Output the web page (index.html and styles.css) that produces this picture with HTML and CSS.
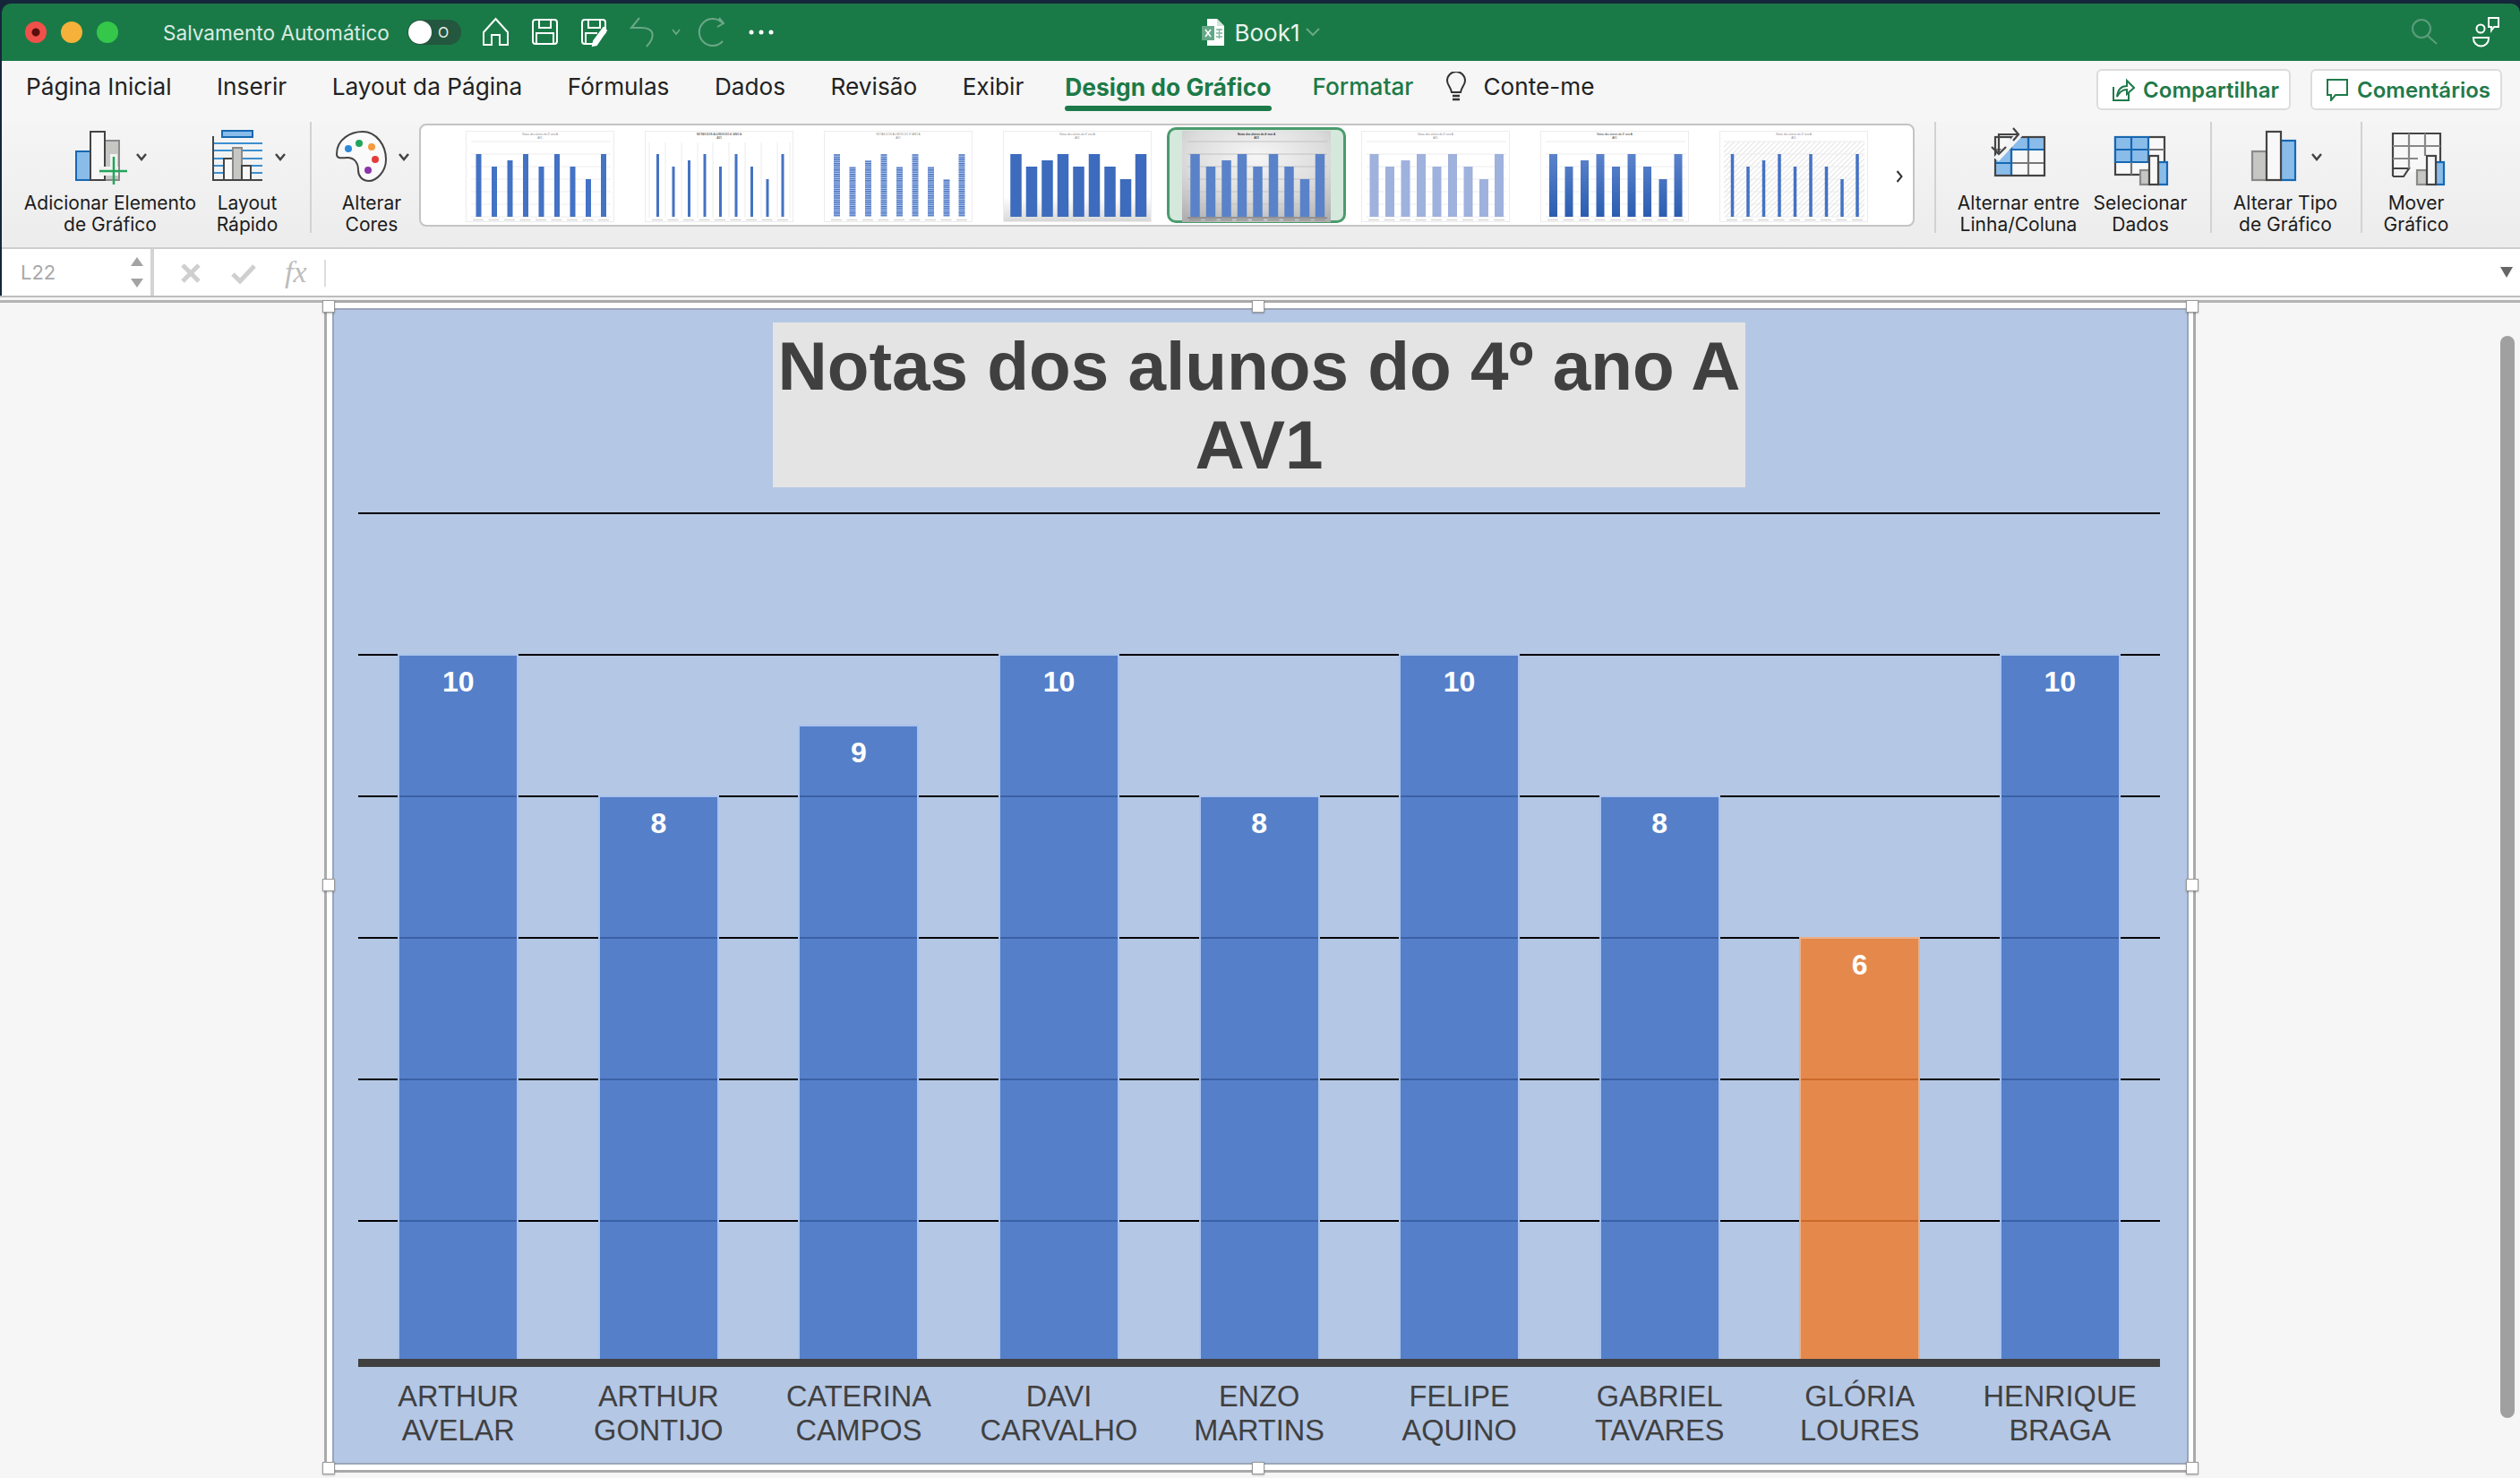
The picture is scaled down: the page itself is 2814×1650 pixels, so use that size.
FILE: index.html
```html
<!DOCTYPE html>
<html lang="pt-BR">
<head>
<meta charset="utf-8">
<title>Book1 - Excel</title>
<link rel="stylesheet" href="styles.css">
</head>
<body>
<svg class="defs" aria-hidden="true">
  <defs>
    <path id="tb" d="M14.5 96V26M32 96V40M49.5 96V33M67 96V26M84.5 96V40M102 96V26M119.5 96V40M137 96V54M154 96V26"/>
    <path id="tg" d="M6 12H162M6 26H162M6 40H162M6 54H162M6 68H162M6 82H162M6 96H162"/>
    <path id="tv" d="M5 13V97M23 13V97M41 13V97M59 13V97M76 13V97M94 13V97M112 13V97M130 13V97M148 13V97M162 13V97"/>
    <path id="tl" d="M8 99.5H160"/>
    <pattern id="stripes" width="2" height="2.4" patternUnits="userSpaceOnUse"><rect width="2" height="2.4" fill="#b6c8ea"/><rect width="2" height="1.3" fill="#4472c4"/></pattern>
    <pattern id="hatch" width="4" height="4" patternUnits="userSpaceOnUse" patternTransform="rotate(45)"><rect width="4" height="4" fill="#fff"/><rect width="1" height="4" fill="#e4e4e4"/></pattern>
    <linearGradient id="bgDark" x1="0" y1="0" x2="0" y2="1"><stop offset="0" stop-color="#fff"/><stop offset=".72" stop-color="#fff"/><stop offset="1" stop-color="#d8d8d8"/></linearGradient>
    <radialGradient id="bgSel" cx=".5" cy=".28" r=".85"><stop offset="0" stop-color="#f6f6f6"/><stop offset=".55" stop-color="#dcdcdc"/><stop offset="1" stop-color="#adadad"/></radialGradient>
    <linearGradient id="barGrad" gradientUnits="userSpaceOnUse" x1="0" y1="26" x2="0" y2="96"><stop offset="0" stop-color="#5b83cc"/><stop offset="1" stop-color="#2b5db0"/></linearGradient>
  </defs>
</svg>

<header class="titlebar">
  <div class="tb-left">
    <span class="light red"></span>
    <span class="light yellow"></span>
    <span class="light green"></span>
    <span class="autosave">Salvamento Automático</span>
    <span class="toggle"><span class="knob"></span><span class="toggle-o">O</span></span>
    <svg class="qat" viewBox="530 14 345 44" width="345" height="44" fill="none" stroke="#fff" stroke-width="2">
      <path d="M540 36L553.500 21L567 36V50H558V39H549V50H540Z"/>
      <path d="M598 22H619Q622 22 622 25V46Q622 49 619 49H598Q595 49 595 46V25Q595 22 598 22ZM602 22V31H615V22M599 49V37H618V49"/>
      <path d="M653 22H673Q676 22 676 25V36L664 49H653Q650 49 650 46V25Q650 22 653 22ZM657 22V31H670V22M654 49V37H667"/>
      <path d="M677 34L666 50L662 51L663 46L674 31Z" fill="#fff"/>
      <g stroke="#6aa888">
        <path d="M714 20L705 31H716C730 31 733 40 722 52"/>
        <path d="M751 33L755 38L759 33" stroke-width="1.800"/>
        <path d="M807 26A15 15 0 1 0 807 46M803 20L808 26L801 30"/>
      </g>
      <g fill="#fff" stroke="none"><circle cx="839" cy="36" r="2.500"/><circle cx="850" cy="36" r="2.500"/><circle cx="861" cy="36" r="2.500"/></g>
    </svg>
  </div>
  <div class="tb-center">
    <svg class="file-ic" viewBox="0 0 26 30" width="26" height="30">
      <path d="M6 0H17L25 8V30H6Z" fill="#fff"/>
      <path d="M17 0L25 8H17Z" fill="#cfe4d8"/>
      <rect x="0" y="8" width="14" height="16" fill="#62a886"/>
      <path d="M4 12L10 20M10 12L4 20" stroke="#fff" stroke-width="1.600"/>
      <path d="M16 12H23M16 16H23M16 20H23M19.500 11V22" stroke="#7fb79b" stroke-width="1.400"/>
    </svg>
    <span class="doc-name">Book1</span>
    <svg class="doc-chev" viewBox="0 0 16 10" width="16" height="10" fill="none" stroke="#6aa888" stroke-width="2"><path d="M1 1L8 8L15 1"/></svg>
  </div>
  <div class="tb-right">
    <svg viewBox="2690 18 105 38" width="105" height="38" fill="none">
      <circle cx="2703" cy="33" r="10" stroke="#5d9d7d" stroke-width="2"/>
      <path d="M2710 41L2720 50" stroke="#5d9d7d" stroke-width="2"/>
      <g stroke="#fff" stroke-width="2">
        <circle cx="2769" cy="33" r="4.500"/>
        <path d="M2761 43H2778V44A8.500 8.500 0 0 1 2761 44Z"/>
        <path d="M2778 21H2789V31H2784L2781 35V31H2778Z"/>
      </g>
    </svg>
  </div>
</header>

<nav class="tabs">
  <div class="tab-list">
    <span class="tab">Página Inicial</span>
    <span class="tab">Inserir</span>
    <span class="tab">Layout da Página</span>
    <span class="tab">Fórmulas</span>
    <span class="tab">Dados</span>
    <span class="tab">Revisão</span>
    <span class="tab">Exibir</span>
    <span class="tab tab-active">Design do Gráfico</span>
    <span class="tab tab-green">Formatar</span>
    <span class="tab tab-tell">
      <span class="tell-row">
        <svg viewBox="0 0 24 34" width="24" height="34" fill="none" stroke="#333" stroke-width="2"><path d="M7 23C6 17 2 15 2 10A10 10 0 0 1 22 10C22 15 18 17 17 23Z"/><path d="M8 27H16M8 31H16" stroke-width="2.400"/></svg>
        Conte-me
      </span>
    </span>
  </div>
  <div class="tab-actions">
    <button class="action">
      <svg viewBox="0 0 26 26" width="26" height="26" fill="none" stroke="#1f7a4b" stroke-width="2"><path d="M2 10V25H19V17"/><path d="M6 21C7 12 12 9 17 9V3L25 11L17 18V13C12 13 9 15 6 21Z"/></svg>
      Compartilhar
    </button>
    <button class="action">
      <svg viewBox="0 0 26 26" width="26" height="26" fill="none" stroke="#1f7a4b" stroke-width="2"><path d="M2 2H24V19H11L6 25V19H2Z"/></svg>
      Comentários
    </button>
  </div>
</nav>

<section class="ribbon">
  <div class="rb-item w-add">
    <svg class="rb-ic" viewBox="27 140 192 72" fill="none" stroke-width="2">
      <rect x="85" y="169" width="16" height="32" fill="#8abcea" stroke="#1668b2"/>
      <rect x="117" y="157" width="16" height="44" fill="#c6c6c4" stroke="#8a8a88"/>
      <rect x="101" y="147" width="16" height="54" fill="#f8f8f8" stroke="#444"/>
      <rect x="110" y="186" width="22" height="10" fill="#f2f2f2" stroke="none"/>
      <rect x="123" y="172" width="8" height="24" fill="#f2f2f2" stroke="none"/>
      <path d="M111 191H142M127 175V206" stroke="#22a65a" stroke-width="2.500"/>
      <path d="M153 172L158 178L163 172" stroke="#444" stroke-width="2.500"/>
    </svg>
    <span class="rb-label">Adicionar Elemento<br>de Gráfico</span>
  </div>
  <div class="rb-item w-layout">
    <svg class="rb-ic" viewBox="226 140 100 72" fill="none" stroke-width="2">
      <path d="M238 160H293M238 168H293M238 177H293M238 185H293M238 193H293" stroke="#3c8fd0"/>
      <rect x="248" y="146" width="34" height="7" fill="#8abcea" stroke="#1668b2"/>
      <rect x="250" y="177" width="10" height="24" fill="#f8f8f8" stroke="#444"/>
      <rect x="260" y="165" width="10" height="36" fill="#c6c6c4" stroke="#8a8a88"/>
      <rect x="270" y="185" width="10" height="16" fill="#f8f8f8" stroke="#444"/>
      <path d="M238 152V201H293" stroke="#444"/>
      <path d="M308 172L313 178L318 172" stroke="#444" stroke-width="2.500"/>
    </svg>
    <span class="rb-label">Layout<br>Rápido</span>
  </div>
  <span class="rb-sep s-a"></span>
  <div class="rb-item w-cores">
    <svg class="rb-ic" viewBox="375 140 80 72" fill="none">
      <path d="M376 172C376 155 392 147 405 147C420 147 431 162 431 178C431 192 420 202 412 202C404 202 400 196 400 190C400 182 396 176 388 176C382 176 376 178 376 172Z" fill="#fafafa" stroke="#444" stroke-width="2"/>
      <circle cx="389" cy="166" r="4" fill="#2e8ad8"/>
      <circle cx="401" cy="160" r="4" fill="#22a55a"/>
      <circle cx="415" cy="164" r="4" fill="#f59a3e"/>
      <circle cx="419" cy="178" r="4" fill="#e53b3b"/>
      <circle cx="411" cy="190" r="4" fill="#8c35a8"/>
      <path d="M446 172L451 178L456 172" stroke="#444" stroke-width="2.500"/>
    </svg>
    <span class="rb-label">Alterar<br>Cores</span>
  </div>

  <div class="gallery">
    <div class="cell">
      <svg class="thumb" viewBox="0 0 166 102">
        <text class="tt" x="83" y="5">Notas dos alunos do 4º ano A</text><text class="tt" x="83" y="9">AV1</text>
        <use href="#tg" class="g-light"/><use href="#tb" class="b-6"/><use href="#tl" class="t-lab"/>
      </svg>
    </div>
    <div class="cell">
      <svg class="thumb" viewBox="0 0 166 102">
        <text class="tt tt-b" x="83" y="5">NOTAS DOS ALUNOS DO 4º ANO A</text><text class="tt tt-b" x="83" y="9">AV1</text>
        <use href="#tv" class="g-light"/><use href="#tb" class="b-3"/><use href="#tl" class="t-lab"/>
      </svg>
    </div>
    <div class="cell">
      <svg class="thumb" viewBox="0 0 166 102">
        <text class="tt" x="83" y="5">NOTAS DOS ALUNOS DO 4º ANO A</text><text class="tt" x="83" y="9">AV1</text>
        <use href="#tb" class="b-stripe"/><use href="#tl" class="t-lab"/>
      </svg>
    </div>
    <div class="cell">
      <svg class="thumb" viewBox="0 0 166 102">
        <rect class="bg-dark" width="166" height="102"/>
        <text class="tt" x="83" y="5">Notas dos alunos do 4º ano A</text><text class="tt" x="83" y="9">AV1</text>
        <use href="#tb" class="b-12"/><use href="#tl" class="t-lab"/>
      </svg>
    </div>
    <div class="cell cell-sel">
      <svg class="thumb thumb-sel" viewBox="0 0 166 102">
        <rect class="bg-sel" width="166" height="102"/>
        <text class="tt tt-b tt-k" x="83" y="5">Notas dos alunos do 4º ano A</text><text class="tt tt-b tt-k" x="83" y="9">AV1</text>
        <use href="#tg" class="g-mid"/><use href="#tb" class="b-10"/><path class="t-axis" d="M6 97H162"/><use href="#tl" class="t-lab-d"/>
      </svg>
    </div>
    <div class="cell">
      <svg class="thumb" viewBox="0 0 166 102">
        <text class="tt" x="83" y="5">Notas dos alunos do 4º ano A</text><text class="tt" x="83" y="9">AV1</text>
        <use href="#tg" class="g-light"/><use href="#tb" class="b-pale"/><use href="#tl" class="t-lab"/>
      </svg>
    </div>
    <div class="cell">
      <svg class="thumb" viewBox="0 0 166 102">
        <text class="tt tt-k" x="83" y="5">Notas dos alunos do 4º ano A</text><text class="tt tt-k" x="83" y="9">AV1</text>
        <use href="#tg" class="g-light"/><use href="#tb" class="b-grad"/><use href="#tl" class="t-lab"/>
      </svg>
    </div>
    <div class="cell">
      <svg class="thumb" viewBox="0 0 166 102">
        <rect class="bg-hatch" x="5" y="12" width="157" height="84"/>
        <text class="tt" x="83" y="5">Notas dos alunos do 4º ano A</text><text class="tt" x="83" y="9">AV1</text>
        <use href="#tg" class="g-light"/><use href="#tb" class="b-3w"/><use href="#tl" class="t-lab"/>
      </svg>
    </div>
    <svg class="gal-next" viewBox="0 0 8 14" width="8" height="14" fill="none" stroke="#333" stroke-width="2"><path d="M1.500 1L6.500 7L1.500 13"/></svg>
  </div>

  <span class="rb-sep s-b"></span>
  <div class="rb-item w-alt">
    <svg class="rb-ic" viewBox="2186 140 136 72" fill="none" stroke-width="2.200">
      <rect x="2228" y="153" width="55" height="43" fill="#f8f8f8"/>
      <path d="M2246 153H2283V167H2228V196H2246V167L2246 153Z" fill="#8abcea"/>
      <path d="M2246 153V196M2265 153V196M2228 167H2283M2228 182H2283" stroke="#777"/>
      <path d="M2246 167H2283M2228 182H2246M2246 153V167M2265 153V167M2246 167V196" stroke="#1668b2"/>
      <rect x="2228" y="153" width="55" height="43" stroke="#444"/>
      <path d="M2226 176L2252 148L2258 152L2232 180Z" fill="#f4f4f4" stroke="none"/>
      <path d="M2232 170V150H2254M2248 143L2254 150L2248 157M2224 164L2232 172L2240 164" stroke="#444"/>
    </svg>
    <span class="rb-label">Alternar entre<br>Linha/Coluna</span>
  </div>
  <div class="rb-item w-sel">
    <svg class="rb-ic" viewBox="2335 140 110 72" fill="none" stroke-width="2.200">
      <rect x="2362" y="153" width="55" height="42" fill="#f8f8f8" stroke="#444"/>
      <path d="M2362 181V153H2399V181Z" fill="#8abcea" stroke="#1668b2"/>
      <path d="M2380 153V181M2362 167H2399" stroke="#1668b2"/>
      <path d="M2380 181V195M2399 167H2417" stroke="#777"/>
      <rect x="2390" y="190" width="10" height="16" fill="#c6c6c4" stroke="#8a8a88"/>
      <rect x="2410" y="181" width="10" height="25" fill="#8abcea" stroke="#1668b2"/>
      <rect x="2400" y="174" width="10" height="32" fill="#f8f8f8" stroke="#444"/>
    </svg>
    <span class="rb-label">Selecionar<br>Dados</span>
  </div>
  <span class="rb-sep s-c"></span>
  <div class="rb-item w-tipo">
    <svg class="rb-ic" viewBox="2487 140 130 72" fill="none" stroke-width="2.200">
      <rect x="2515" y="169" width="16" height="32" fill="#c6c6c4" stroke="#8a8a88"/>
      <rect x="2547" y="157" width="16" height="44" fill="#8abcea" stroke="#1668b2"/>
      <rect x="2531" y="147" width="16" height="54" fill="#f8f8f8" stroke="#444"/>
      <path d="M2582 172L2587 178L2592 172" stroke="#444" stroke-width="2.500"/>
    </svg>
    <span class="rb-label">Alterar Tipo<br>de Gráfico</span>
  </div>
  <span class="rb-sep s-d"></span>
  <div class="rb-item w-mover">
    <svg class="rb-ic" viewBox="2648 140 100 72" fill="none" stroke-width="2.200">
      <path d="M2672 197V149H2725V186M2672 197H2684L2690 188H2672" fill="#f8f8f8" stroke="#444"/>
      <path d="M2690 149V188M2708 149V174M2672 163H2725M2672 177H2700" stroke="#888"/>
      <rect x="2699" y="190" width="11" height="16" fill="#c6c6c4" stroke="#8a8a88"/>
      <rect x="2720" y="181" width="9" height="25" fill="#8abcea" stroke="#1668b2"/>
      <rect x="2710" y="174" width="10" height="32" fill="#f8f8f8" stroke="#444"/>
    </svg>
    <span class="rb-label">Mover<br>Gráfico</span>
  </div>
</section>

<section class="formula">
  <div class="namebox">
    <span class="cellref">L22</span>
    <svg viewBox="0 0 14 34" width="14" height="34" fill="#a3a3a3"><path d="M7 0L14 10H0ZM7 34L0 24H14Z"/></svg>
  </div>
  <svg class="fx-tools" viewBox="174 284 196 40" width="196" height="40" fill="none">
    <path d="M204 296L222 314M222 296L204 314" stroke="#cfcfcf" stroke-width="5"/>
    <path d="M260 306L268 314L284 297" stroke="#cfcfcf" stroke-width="5"/>
    <text class="fx-text" x="318" y="315">fx</text>
    <path d="M363 290V320" stroke="#ddd" stroke-width="2"/>
  </svg>
  <svg class="fx-drop" viewBox="0 0 14 12" width="14" height="12" fill="#666"><path d="M0 0H14L7 12Z"/></svg>
</section>
<div class="formula-rule"></div>

<main class="sheet">
  <div class="frame">
    <span class="handle h-tl"></span><span class="handle h-tc"></span><span class="handle h-tr"></span>
    <span class="handle h-ml"></span><span class="handle h-mr"></span>
    <span class="handle h-bl"></span><span class="handle h-bc"></span><span class="handle h-br"></span>
    <div class="chart">
      <h1 class="chart-title">Notas dos alunos do 4º ano A<br>AV1</h1>
      <div class="plot">
        <div class="col"><div class="bar" style="height:787px">10</div></div>
        <div class="col"><div class="bar" style="height:629px">8</div></div>
        <div class="col"><div class="bar" style="height:708px">9</div></div>
        <div class="col"><div class="bar" style="height:787px">10</div></div>
        <div class="col"><div class="bar" style="height:629px">8</div></div>
        <div class="col"><div class="bar" style="height:787px">10</div></div>
        <div class="col"><div class="bar" style="height:629px">8</div></div>
        <div class="col"><div class="bar bar-low" style="height:471px">6</div></div>
        <div class="col"><div class="bar" style="height:787px">10</div></div>
      </div>
      <div class="axis"></div>
      <div class="cats">
        <span class="cat">ARTHUR<br>AVELAR</span>
        <span class="cat">ARTHUR<br>GONTIJO</span>
        <span class="cat">CATERINA<br>CAMPOS</span>
        <span class="cat">DAVI<br>CARVALHO</span>
        <span class="cat">ENZO<br>MARTINS</span>
        <span class="cat">FELIPE<br>AQUINO</span>
        <span class="cat">GABRIEL<br>TAVARES</span>
        <span class="cat">GLÓRIA<br>LOURES</span>
        <span class="cat">HENRIQUE<br>BRAGA</span>
      </div>
    </div>
  </div>
  <div class="scrollbar"></div>
</main>
</body>
</html>
```

FILE: styles.css
```css
* { box-sizing: border-box; }
html, body { margin: 0; height: 1650px; overflow: hidden; }
body {
  width: 2814px;
  padding-top: 4px;
  background: #16263a;
  font-family: Inter, "Liberation Sans", sans-serif;
  color: #1e1e1e;
}
.defs { position: absolute; width: 0; height: 0; }

/* title bar */
.titlebar {
  margin-left: 2px;
  height: 64px;
  background: #1a7a47;
  border-radius: 10px 10px 0 0;
  display: grid;
  grid-template-columns: 1fr auto 1fr;
  align-items: center;
}
.tb-left { display: flex; align-items: center; padding-left: 26px; }
.light { width: 24px; height: 24px; border-radius: 50%; margin-right: 16px; flex: none; }
.red { background: radial-gradient(circle, #5a0d0d 0 4px, #f0504a 5px); }
.yellow { background: #f6b13a; }
.green { background: #34c749; }
.autosave { margin-left: 34px; font-size: 22.600px; color: #dbeae1; white-space: nowrap; }
.toggle {
  margin-left: 20px; width: 60px; height: 28px; border-radius: 14px; background: #24573f;
  display: flex; align-items: center; flex: none;
}
.knob { width: 26px; height: 26px; border-radius: 50%; background: #fff; margin-left: 1px; }
.toggle-o { margin-left: 7px; font-size: 16px; color: #e6f0ea; }
.qat { margin-left: 15px; flex: none; }
.tb-center { display: flex; align-items: center; }
.file-ic { flex: none; margin-right: 10px; }
.doc-name { font-size: 26px; color: #eaf4ee; }
.doc-chev { margin-left: 6px; }
.tb-right { display: flex; justify-content: flex-end; padding-right: 18px; }

/* tabs */
.tabs {
  margin-left: 2px;
  height: 68px;
  background: #f6f6f6;
  display: flex;
  justify-content: space-between;
  padding: 0 20px 0 27px;
}
.tab-list { display: flex; gap: 50.500px; }
.tab {
  display: flex; flex-direction: column; height: 56px; line-height: 58px;
  font-size: 26.200px; color: #222; white-space: nowrap;
}
.tab::after { content: ""; display: block; height: 6px; margin-top: -8px; border-radius: 3px; }
.tab-active { color: #1c7a48; font-weight: 700; margin-left: -4.500px; font-size: 26.400px; }
.tab-active::after { background: #1c7a48; }
.tab-green { color: #1c7a48; margin-left: -4.500px; font-weight: 500; }
.tell-row { display: flex; align-items: center; gap: 18px; height: 58px; margin-left: -14.500px; }
.tab-actions { display: flex; gap: 22px; padding-top: 9px; }
.action {
  height: 46px; padding: 0 11px 0 15px; display: flex; align-items: center; gap: 9px;
  background: #fff; border: 2px solid #dcdcdc; border-radius: 6px;
  font-family: inherit; font-size: 24px; font-weight: 600; color: #1f7a4b; white-space: nowrap;
}

/* ribbon */
.ribbon {
  margin-left: 2px;
  height: 142px;
  background: linear-gradient(#f5f5f5, #ececec);
  border-bottom: 2px solid #cdcdcd;
  display: flex;
  align-items: flex-start;
  padding-left: 25px;
}
.rb-item { display: flex; flex-direction: column; align-items: center; flex: none; padding-top: 4px; }
.rb-ic { display: block; width: 100%; height: 72px; overflow: visible; }
.rb-label { margin-top: 3px; font-size: 21px; line-height: 24px; text-align: center; color: #1c1c1c; white-space: nowrap; }
.w-add { width: 192px; }
.w-layout { width: 100px; margin-left: 7px; }
.w-cores { width: 80px; margin-left: 27px; }
.w-alt { width: 136px; margin-left: 24px; }
.w-sel { width: 110px; margin-left: 13px; }
.w-tipo { width: 130px; margin-left: 17px; }
.w-mover { width: 100px; margin-left: 10px; }
.rb-sep { width: 2px; height: 124px; background: #d2d2d2; flex: none; }
.s-a { margin-left: 20px; }
.s-b { margin-left: 22px; }
.s-c { margin-left: 23px; }
.s-d { margin-left: 19px; }

.gallery {
  margin: 2px 0 0 13px;
  width: 1670px; height: 115px;
  background: #fff;
  border: 2px solid #c4c4c4;
  border-radius: 8px;
  display: flex;
  align-items: flex-start;
  padding-left: 33px;
  flex: none;
}
.cell { width: 200px; height: 111px; padding-top: 6px; display: flex; justify-content: center; flex: none; }
.cell-sel {
  height: 107px; margin-top: 2px; padding-top: 1px;
  background: #d5e8dc; border: 3px solid #4a9b6e; border-radius: 10px;
}
.thumb { width: 166px; height: 102px; background: #fff; outline: 1px solid #ececec; outline-offset: -1px; display: block; }
.thumb-sel { outline: none; background: #ddd; }
.tt { font-family: "Liberation Sans", sans-serif; font-size: 3px; text-anchor: middle; fill: #8a8a8a; }
.tt-b { font-weight: 700; fill: #666; }
.tt-k { fill: #333; }
.g-light { stroke: #ececec; stroke-width: 1; fill: none; }
.g-mid { stroke: #c2c2c2; stroke-width: 1; fill: none; }
.t-lab { stroke: #d8d8d8; stroke-width: 1.500; stroke-dasharray: 12 5.500; fill: none; }
.t-lab-d { stroke: #9a9a9a; stroke-width: 2; stroke-dasharray: 13 4.500; fill: none; }
.t-axis { stroke: #666; stroke-width: 1.200; fill: none; }
.b-6 { stroke: #4472c4; stroke-width: 6; fill: none; }
.b-3 { stroke: #4472c4; stroke-width: 3; fill: none; }
.b-3w { stroke: #4472c4; stroke-width: 3.500; fill: none; }
.b-stripe { stroke: url(#stripes); stroke-width: 7; fill: none; }
.b-12 { stroke: #3d6bbd; stroke-width: 12.500; fill: none; }
.b-10 { stroke: #5a82c9; stroke-width: 10.500; fill: none; }
.b-pale { stroke: #9fb1dd; stroke-width: 10; fill: none; }
.b-grad { stroke: url(#barGrad); stroke-width: 9; fill: none; }
.bg-dark { fill: url(#bgDark); }
.bg-sel { fill: url(#bgSel); }
.bg-hatch { fill: url(#hatch); }
.gal-next { flex: none; margin: 50px 0 0 14px; }

/* formula bar */
.formula {
  margin-left: 2px;
  height: 52px;
  background: #fff;
  display: flex;
  align-items: center;
}
.formula-rule { height: 5px; background: #f4f4f4; border-top: 2px solid #bdbdbd; }
.namebox {
  width: 170px; height: 100%; border-right: 4px solid #d4d4d4; margin-right: 2px;
  display: flex; align-items: center; justify-content: space-between; padding: 0 8px 0 21px; flex: none;
}
.cellref { font-size: 22px; color: #a8a8a8; }
.fx-text { font-family: "Liberation Serif", serif; font-style: italic; font-size: 34px; fill: #bdbdbd; }
.fx-tools { flex: none; }
.fx-drop { margin-left: auto; margin-right: 8px; }

/* sheet */
.sheet {
  position: relative;
  height: 1315px;
  padding-left: 362px;
  background: #f6f6f6;
  border-top: 3px solid #b4b4b4;
}
.frame {
  position: relative;
  width: 2090px; height: 1309px;
  margin-top: -3px;
  background: #fff;
  border: 3px solid #aaa;
  padding: 6px 5px 6px 6px;
}
.handle {
  position: absolute; width: 14px; height: 14px;
  background: #fff; border: 1px solid #999; box-shadow: 0 1px 2px rgba(0,0,0,.25);
}
.h-tl { left: -5px; top: -3px; }
.h-tc { left: 1033px; top: -3px; }
.h-tr { right: -6px; top: -3px; }
.h-ml { left: -5px; top: 643px; }
.h-mr { right: -6px; top: 643px; }
.h-bl { left: -5px; bottom: -5px; }
.h-bc { left: 1033px; bottom: -5px; }
.h-br { right: -6px; bottom: -5px; }
.chart {
  height: 1291px;
  background: #b4c7e5;
  border: 2px solid #9aa6b8;
  padding-top: 14px;
  font-family: "Liberation Sans", sans-serif;
}
.chart-title {
  width: 1086px; height: 184px; margin: 0 0 0 490px; padding-top: 2px;
  background: #e4e4e4;
  display: flex; align-items: center; justify-content: center; text-align: center;
  font-size: 76.500px; line-height: 88px; font-weight: 700; color: #404040; white-space: nowrap;
}
.plot {
  height: 945px;
  margin: 28px 30px 0 27px;
  display: flex;
  align-items: flex-end;
  background: repeating-linear-gradient(to bottom, #000 0, #000 2px, transparent 2px, transparent 158px);
}
.col { flex: 1; display: flex; justify-content: center; align-items: flex-end; }
.bar {
  width: 135px;
  background: rgba(68,114,196,.85);
  border: 2px solid #a9c3ec;
  border-bottom: 0;
  text-align: center;
  color: #fff;
  font-size: 32px;
  font-weight: 700;
  line-height: 36px;
  padding-top: 11px;
}
.bar-low { background: rgba(237,125,49,.85); border-color: #e9b08a; }
.axis { height: 9px; margin: 0 30px 0 27px; background: #404040; }
.cats { display: flex; margin: 14px 30px 0 27px; }
.cat { flex: 1; text-align: center; font-size: 32.500px; line-height: 38px; color: #404040; white-space: nowrap; }
.scrollbar {
  position: absolute; left: 2792px; top: 37px;
  width: 16px; height: 1208px; border-radius: 8px; background: #a0a0a0;
}
```
